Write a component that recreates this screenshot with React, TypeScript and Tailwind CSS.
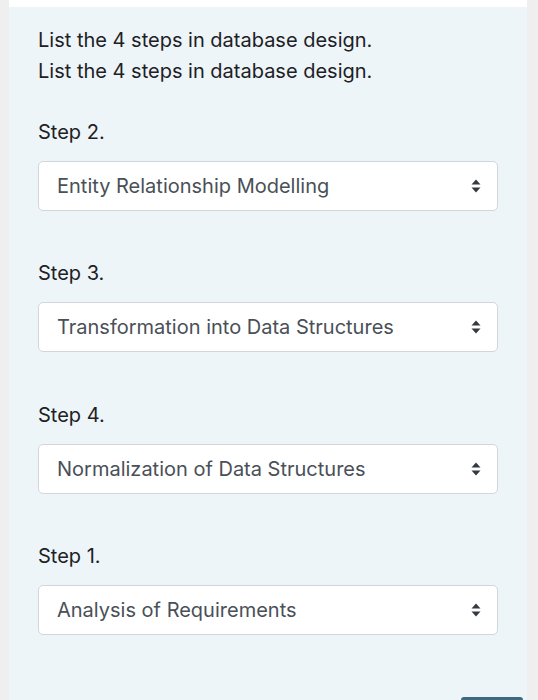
import React from "react";

const steps = [
  { label: "Step 2.", value: "Entity Relationship Modelling" },
  { label: "Step 3.", value: "Transformation into Data Structures" },
  { label: "Step 4.", value: "Normalization of Data Structures" },
  { label: "Step 1.", value: "Analysis of Requirements" },
];

function UpDown() {
  return (
    <svg width="10" height="14" viewBox="0 0 10 14" className="shrink-0">
      <path d="M5 0.5 L9.5 5.5 H0.5 Z" fill="#343a40" />
      <path d="M5 13.5 L9.5 8.5 H0.5 Z" fill="#343a40" />
    </svg>
  );
}

export default function App() {
  return (
    <div
      className="flex h-[700px] w-[538px] overflow-hidden bg-[#efefef]"
      style={{ fontFamily: "Inter, 'Liberation Sans', Arial, sans-serif" }}
    >
      <div className="ml-[9px] flex w-[518px] flex-col bg-[#edf5f8]">
        <div className="h-[7px] bg-white" />
        <div className="flex flex-1 flex-col px-[29px] pt-[18px]">
          <p className="text-[20px] leading-[31px] text-[#1d2125]">List the 4 steps in database design.</p>
          <p className="text-[20px] leading-[31px] text-[#1d2125]">List the 4 steps in database design.</p>

          <div className="mt-[30px] flex flex-col">
            {steps.map((s, i) => (
              <div key={i} className="mb-[47.4px] flex flex-col">
                <label className="text-[20px] leading-[30px] text-[#1d2125]">{s.label}</label>
                <div className="mt-[14px] flex h-[50px] items-center justify-between rounded-[5px] border border-[#d2d6da] bg-white pl-[18px] pr-[16px]">
                  <span className="text-[20px] text-[#495057]">{s.value}</span>
                  <UpDown />
                </div>
              </div>
            ))}
          </div>

          <div className="mt-auto flex justify-end">
            <div className="mr-[-25px] h-[3px] w-[62px] rounded-t-[4px] bg-[#3d6a7d]" />
          </div>
        </div>
      </div>
    </div>
  );
}
